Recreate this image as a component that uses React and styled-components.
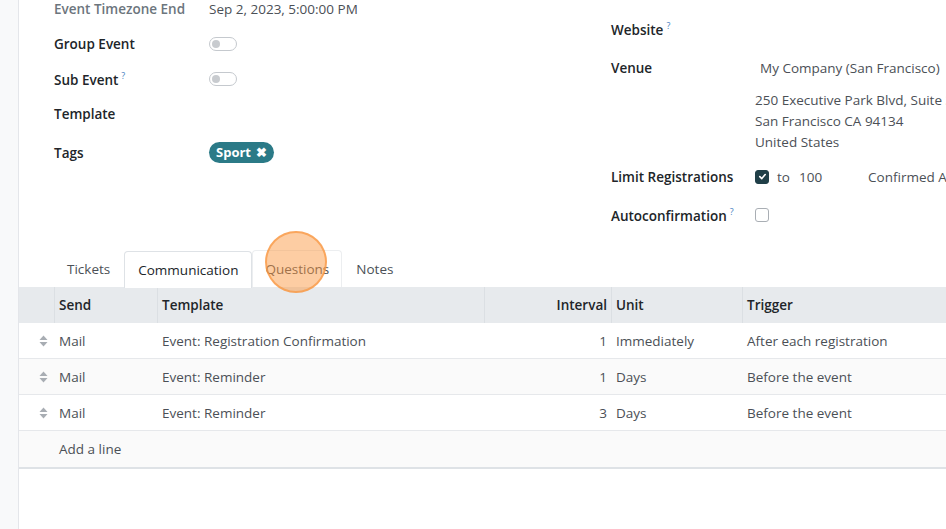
import React from 'react';
import styled, { createGlobalStyle } from 'styled-components';

const Global = createGlobalStyle`
  html, body {
    margin: 0;
    padding: 0;
    height: 100%;
    overflow: hidden;
    background: #ffffff;
  }
  body {
    font-family: "Open Sans", "Noto Sans", sans-serif;
    font-size: 13.5px;
    color: #212529;
  }
`;

const Page = styled.div`
  display: flex;
  height: 529px;
  position: relative;
  overflow: hidden;
`;

const Gutter = styled.div`
  width: 18px;
  flex: none;
  background: #f8f9fa;
  border-right: 1px solid #e4e6ea;
`;

const Main = styled.div`
  flex: 1;
  display: flex;
  flex-direction: column;
  background: #fff;
  min-width: 0;
  overflow: hidden;
`;

const Form = styled.div`
  display: grid;
  grid-template-columns: 557px 1fr;
  padding-left: 35px;
  margin-top: -9px;
`;

const Column = styled.div`
  display: flex;
  flex-direction: column;
  min-width: 0;
`;

const Row = styled.div`
  display: flex;
  align-items: center;
  white-space: nowrap;
  min-height: ${p => p.h || 35}px;
  margin-top: ${p => p.mt || 0}px;
`;

const Label = styled.div`
  width: ${p => p.w || 155}px;
  flex: none;
  font-weight: 600;
  color: ${p => (p.muted ? '#6c757d' : '#212529')};
`;

const Help = styled.sup`
  color: #4a7fbf;
  font-size: 9px;
  font-weight: 400;
  margin-left: 3px;
`;

const Value = styled.div`
  color: #4b5056;
  padding-left: ${p => p.pad || 0}px;
`;

const Toggle = styled.span`
  display: inline-block;
  width: 26px;
  height: 12px;
  border: 1px solid #c5c9ce;
  border-radius: 8px;
  position: relative;
  &::after {
    content: '';
    position: absolute;
    left: 2px;
    top: 2px;
    width: 8px;
    height: 8px;
    border-radius: 50%;
    background: #c8cbcf;
  }
`;

const Tag = styled.span`
  display: inline-flex;
  align-items: center;
  gap: 5px;
  background: #2b7a87;
  color: #fff;
  font-weight: 700;
  border-radius: 11px;
  padding: 1px 7px;
  font-size: 13px;
  line-height: 19px;
`;

const Address = styled.div`
  color: #4b5056;
  line-height: 21px;
  margin-left: 144px;
  margin-top: 2px;
  white-space: nowrap;
`;

const Check = styled.span`
  box-sizing: border-box;
  display: inline-flex;
  align-items: center;
  justify-content: center;
  width: 14px;
  height: 14px;
  border-radius: 3px;
  background: ${p => (p.on ? '#203f48' : '#fff')};
  border: 1px solid ${p => (p.on ? '#203f48' : '#a9aeb4')};
`;

const Inline = styled.div`
  display: flex;
  align-items: center;
  color: #4b5056;
`;

const Word = styled.span`
  margin-left: ${p => p.ml || 0}px;
`;

const Tabs = styled.div`
  display: flex;
  padding-left: 35px;
  margin-top: 17px;
  height: 37px;
  align-items: flex-end;
`;

const Tab = styled.div`
  height: 36px;
  display: flex;
  align-items: center;
  padding: 0 ${p => (p.active ? 13 : 12)}px;
  margin-right: ${p => (p.active ? 0 : 1)}px;
  color: ${p => (p.active ? '#212529' : '#4b5056')};
  border: 1px solid ${p => (p.active ? '#dee2e6' : p.hover ? '#eceef0' : 'transparent')};
  border-bottom: none;
  border-radius: 4px 4px 0 0;
  background: #fff;
  margin-bottom: ${p => (p.active ? '-1px' : '0')};
  position: relative;
  z-index: 1;
`;

const Table = styled.div`
  display: grid;
  grid-template-columns: 35px 103px 327px 127px 131px 1fr;
  border-bottom: 2px solid #dee2e6;
`;

const Head = styled.div`
  background: #e7eaed;
  height: 36px;
  display: flex;
  align-items: center;
  justify-content: ${p => (p.right ? 'flex-end' : 'flex-start')};
  padding: 0 4px;
  font-weight: 600;
  color: #212529;
  border-left: ${p => (p.first ? 'none' : '1px solid #dbdfe3')};
`;

const Cell = styled.div`
  box-sizing: border-box;
  height: 36px;
  display: flex;
  align-items: center;
  justify-content: ${p => (p.right ? 'flex-end' : 'flex-start')};
  padding: 0 ${p => (p.right ? 4 : 5)}px;
  color: #4b5056;
  background: ${p => (p.striped ? '#fafafa' : '#fff')};
  border-bottom: ${p => (p.last ? 'none' : '1px solid #e6e8eb')};
  white-space: nowrap;
`;

const HandleCell = styled(Cell)`
  justify-content: flex-end;
  padding-right: 6px;
`;

const Marker = styled.div`
  position: absolute;
  left: 265px;
  top: 231px;
  width: 58px;
  height: 58px;
  border-radius: 50%;
  background: rgba(251, 150, 62, 0.48);
  border: 2px solid rgba(248, 150, 62, 0.7);
  pointer-events: none;
  z-index: 10;
`;

const Handle = () => (
  <svg width="9" height="12" viewBox="0 0 9 12">
    <path d="M4.5 0.5 L8.5 5 L0.5 5 Z" fill="#a8adb3" />
    <path d="M4.5 11.5 L8.5 7 L0.5 7 Z" fill="#a8adb3" />
  </svg>
);

const Tick = () => (
  <svg width="9" height="9" viewBox="0 0 10 10">
    <path d="M2 5.2 L4.2 7.3 L8 2.8" fill="none" stroke="#fff" strokeWidth="1.8" strokeLinecap="round" strokeLinejoin="round" />
  </svg>
);

const rows = [
  { send: 'Mail', template: 'Event: Registration Confirmation', interval: 1, unit: 'Immediately', trigger: 'After each registration' },
  { send: 'Mail', template: 'Event: Reminder', interval: 1, unit: 'Days', trigger: 'Before the event' },
  { send: 'Mail', template: 'Event: Reminder', interval: 3, unit: 'Days', trigger: 'Before the event' },
];

const App = () => {
  return (
    <Page>
      <Global />
      <Gutter />
      <Main>
        <Form>
          <Column>
            <Row>
              <Label muted>Event Timezone End</Label>
              <Value>Sep 2, 2023, 5:00:00 PM</Value>
            </Row>
            <Row>
              <Label>Group Event</Label>
              <Toggle />
            </Row>
            <Row>
              <Label>Sub Event<Help>?</Help></Label>
              <Toggle />
            </Row>
            <Row>
              <Label>Template</Label>
            </Row>
            <Row h={43}>
              <Label>Tags</Label>
              <Tag>Sport <span>✖</span></Tag>
            </Row>
          </Column>
          <Column>
            <Row h={38} mt={19}>
              <Label w={144}>Website<Help>?</Help></Label>
            </Row>
            <Row h={40}>
              <Label w={144}>Venue</Label>
              <Value pad={5}>My Company (San Francisco)</Value>
            </Row>
            <Address>
              250 Executive Park Blvd, Suite 3400<br />
              San Francisco CA 94134<br />
              United States
            </Address>
            <Row h={41} mt={3}>
              <Label w={144}>Limit Registrations</Label>
              <Inline>
                <Check on><Tick /></Check>
                <Word ml={8}>to</Word>
                <Word ml={9}>100</Word>
                <Word ml={46}>Confirmed Attendees</Word>
              </Inline>
            </Row>
            <Row h={36}>
              <Label w={144}>Autoconfirmation<Help>?</Help></Label>
              <Check />
            </Row>
          </Column>
        </Form>
        <Tabs>
          <Tab>Tickets</Tab>
          <Tab active>Communication</Tab>
          <Tab hover>Questions</Tab>
          <Tab>Notes</Tab>
        </Tabs>
        <Table>
          <Head first />
          <Head>Send</Head>
          <Head>Template</Head>
          <Head right>Interval</Head>
          <Head>Unit</Head>
          <Head>Trigger</Head>
          {rows.map((r, i) => (
            <React.Fragment key={i}>
              <HandleCell striped={i % 2 === 1}><Handle /></HandleCell>
              <Cell striped={i % 2 === 1}>{r.send}</Cell>
              <Cell striped={i % 2 === 1}>{r.template}</Cell>
              <Cell striped={i % 2 === 1} right>{r.interval}</Cell>
              <Cell striped={i % 2 === 1}>{r.unit}</Cell>
              <Cell striped={i % 2 === 1}>{r.trigger}</Cell>
            </React.Fragment>
          ))}
          <Cell striped last />
          <Cell striped last>Add a line</Cell>
          <Cell striped last />
          <Cell striped last />
          <Cell striped last />
          <Cell striped last />
        </Table>
      </Main>
      <Marker />
    </Page>
  );
};

export default App;
